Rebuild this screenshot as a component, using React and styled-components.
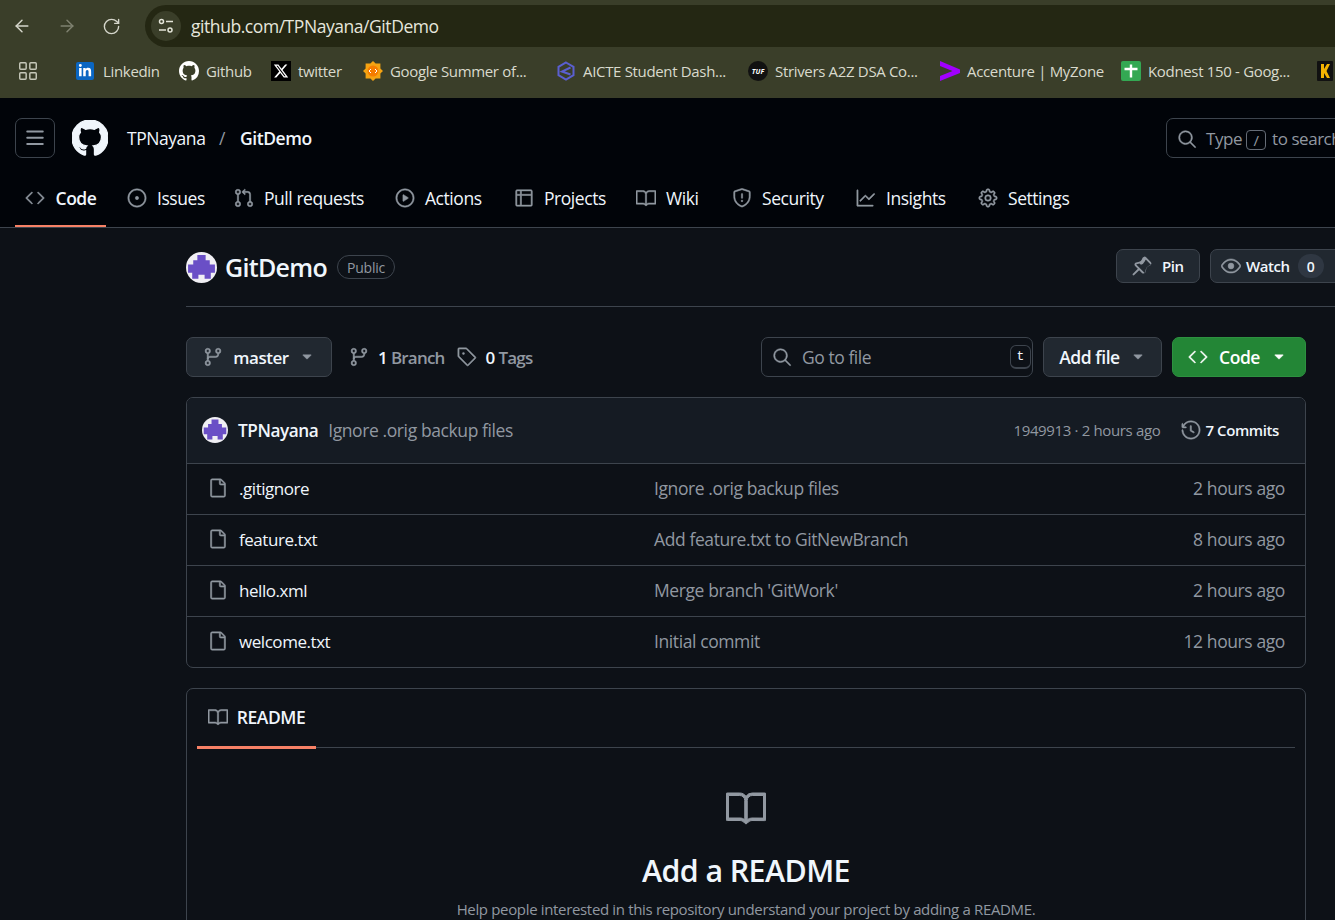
import styled, { createGlobalStyle } from "styled-components";
import { ArrowLeft, ArrowRight, RotateCw, LayoutGrid } from "lucide-react";
import { FaLinkedinIn } from "react-icons/fa";
import { FaXTwitter } from "react-icons/fa6";
import { BsGithub } from "react-icons/bs";
import {
  GoCode,
  GoIssueOpened,
  GoGitPullRequest,
  GoPlay,
  GoTable,
  GoBook,
  GoShield,
  GoGraph,
  GoGear,
  GoEye,
  GoGitBranch,
  GoTag,
  GoSearch,
  GoFile,
  GoHistory,
  GoTriangleDown,
} from "react-icons/go";

const GlobalStyle = createGlobalStyle`
  html, body {
    margin: 0;
    height: 920px;
    overflow: hidden;
    background: #0d1117;
  }
  body {
    font-family: "Open Sans", "Noto Sans", sans-serif;
    font-size: 17px;
    letter-spacing: -0.45px;
    color: #f0f6fc;
  }
  * { box-sizing: border-box; }
  /* octicons come from the 24px set, the page shows the heavier 16px ones */
  header svg[stroke-width="0"], main svg[stroke-width="0"] {
    stroke-width: 0.6px;
  }
`;

const Chrome = styled.div`
  height: 98px;
  background: #3a3e29;
  overflow: hidden;
`;

const ChromeTop = styled.div`
  height: 47px;
  padding-top: 5px;
  display: flex;
  align-items: center;
`;

const NavArrows = styled.div`
  width: 145px;
  flex-shrink: 0;
  display: flex;
  align-items: center;
  gap: 25px;
  padding-left: 12px;
`;

const NavBtn = styled.span`
  display: flex;
  color: ${(p) => (p.$off ? "#7f8270" : "#d5d6cb")};
`;

const Omnibox = styled.div`
  flex: 1;
  height: 42px;
  margin-right: -40px;
  background: #242713;
  border-radius: 21px;
  display: flex;
  align-items: center;
  padding-left: 6px;
  gap: 10px;
`;

const TuneChip = styled.span`
  width: 30px;
  height: 30px;
  border-radius: 50%;
  background: #3a3e29;
  display: flex;
  align-items: center;
  justify-content: center;
`;

const Url = styled.span`
  font-size: 17.5px;
  letter-spacing: -0.44px;
  color: #e6e6dc;
`;

const BookmarkBar = styled.div`
  height: 51px;
  padding: 0 0 3px 17px;
  display: flex;
  align-items: center;
  white-space: nowrap;
`;

const AppsBtn = styled.span`
  display: flex;
  color: #c5c7b8;
  margin-right: 17px;
`;

const BarDivider = styled.span`
  width: 1px;
  height: 20px;
  background: #5c604a;
  margin-right: 20px;
`;

const Bookmark = styled.div`
  display: flex;
  align-items: center;
  gap: 7px;
  width: ${(p) => p.$w}px;
  flex-shrink: 0;
  font-size: 15px;
  letter-spacing: -0.33px;
  color: #d9dacd;
`;

const FavSlot = styled.span`
  width: 20px;
  height: 20px;
  flex-shrink: 0;
  display: flex;
  align-items: center;
`;

const Header = styled.header`
  height: 130px;
  background: #010409;
  border-bottom: 1px solid #3d444d;
  overflow: hidden;
`;

const HeaderTop = styled.div`
  height: 80px;
  padding: 20px 0 0 15px;
  display: flex;
  align-items: flex-start;
`;

const MenuBtn = styled.button`
  width: 40px;
  height: 40px;
  flex-shrink: 0;
  background: transparent;
  border: 1px solid #3d444d;
  border-radius: 7px;
  color: #9198a1;
  display: flex;
  align-items: center;
  justify-content: center;
  padding: 0;
`;

const Logo = styled.span`
  display: flex;
  margin: 2px 0 0 17px;
  color: #f0f6fc;
`;

const Crumbs = styled.div`
  height: 40px;
  margin-left: 19px;
  width: 1039px;
  flex-shrink: 0;
  display: flex;
  align-items: center;
  font-size: 17.5px;
`;

const Owner = styled.span`
  width: 92px;
`;

const Slash = styled.span`
  width: 21px;
  color: #9198a1;
`;

const RepoCrumb = styled.span`
  font-weight: 600;
`;

const SearchBox = styled.div`
  width: 300px;
  height: 40px;
  flex-shrink: 0;
  border: 1px solid #3d444d;
  border-radius: 7px;
  display: flex;
  align-items: center;
  padding: 1px 0 0 10px;
  gap: 9px;
  color: #9198a1;
  white-space: nowrap;
`;

const SlashKey = styled.span`
  display: inline-flex;
  align-items: center;
  justify-content: center;
  width: 20px;
  height: 20px;
  margin: 0 6px 0 4px;
  border: 1px solid #656c76;
  border-radius: 4px;
  font-size: 15px;
  vertical-align: -1px;
`;

const Tabs = styled.nav`
  height: 49px;
  padding-left: 15px;
  display: flex;
  align-items: flex-start;
  gap: 10.5px;
`;

const Tab = styled.div`
  width: ${(p) => p.$w}px;
  flex-shrink: 0;
  height: 49px;
  padding: 0 0 7px 10px;
  display: flex;
  align-items: center;
  gap: 10.5px;
  font-size: 17.5px;
  font-weight: ${(p) => (p.$active ? 600 : 400)};
  color: #f0f6fc;
  border-bottom: 2px solid ${(p) => (p.$active ? "#f78166" : "transparent")};
  svg { color: #9198a1; }
`;

const Page = styled.main`
  height: 692px;
  padding-left: 186px;
  overflow: hidden;
`;

const RepoHead = styled.div`
  height: 79px;
  border-bottom: 1px solid #3d444d;
  display: flex;
  align-items: flex-start;
  padding-top: 21px;
  white-space: nowrap;
`;

const RepoTitle = styled.div`
  width: 930px;
  height: 36px;
  flex-shrink: 0;
  display: flex;
  align-items: center;
`;

const RepoName = styled.span`
  font-size: 25px;
  font-weight: 600;
  letter-spacing: -0.7px;
  margin: 0 10px 0 8px;
`;

const Badge = styled.span`
  height: 24px;
  padding: 0 9px;
  border: 1px solid #3d444d;
  border-radius: 12px;
  font-size: 14px;
  font-weight: 500;
  letter-spacing: -0.2px;
  color: #9198a1;
  display: flex;
  align-items: center;
`;

const RepoActions = styled.div`
  display: flex;
  gap: 10px;
  flex-shrink: 0;
`;

const SmallBtn = styled.div`
  height: 34px;
  width: ${(p) => p.$w}px;
  flex-shrink: 0;
  background: #212830;
  border: 1px solid #3d444d;
  border-radius: 7px;
  display: flex;
  align-items: center;
  padding-left: ${(p) => p.$pad}px;
  gap: ${(p) => p.$gap}px;
  font-size: 15px;
  font-weight: 600;
  letter-spacing: -0.45px;
  svg { color: #9198a1; }
`;

const Counter = styled.span`
  width: 26px;
  height: 24px;
  border-radius: 12px;
  background: #2f3742;
  display: flex;
  align-items: center;
  justify-content: center;
  font-size: 14px;
  margin-left: 3px;
`;

const Content = styled.div`
  width: 1120px;
`;

const FileBar = styled.div`
  height: 40px;
  margin-top: 30px;
  display: flex;
  align-items: center;
`;

const Btn = styled.div`
  height: 40px;
  width: ${(p) => p.$w}px;
  flex-shrink: 0;
  padding-right: ${(p) => (p.$green ? 3 : 0)}px;
  background: ${(p) => (p.$green ? "#238636" : "#212830")};
  border: 1px solid ${(p) => (p.$green ? "#2d9140" : "#3d444d")};
  border-radius: 7px;
  display: flex;
  align-items: center;
  justify-content: center;
  gap: ${(p) => p.$gap || 10}px;
  font-size: 17.5px;
  font-weight: 600;
  color: ${(p) => (p.$green ? "#ffffff" : "#f0f6fc")};
  svg { color: ${(p) => (p.$green ? "#ffffff" : "#9198a1")}; }
`;

const BranchName = styled.span`
  font-size: 17px;
`;

const Stat = styled.div`
  display: flex;
  align-items: center;
  gap: 9px;
  margin-left: ${(p) => p.$ml}px;
  color: #9198a1;
  font-weight: 600;
  letter-spacing: -0.8px;
  svg { color: #9198a1; }
  b { color: #f0f6fc; font-weight: 600; margin-right: -5px; }
`;

const FileSearch = styled.div`
  width: 272px;
  height: 40px;
  margin-left: auto;
  margin-right: 10px;
  border: 1px solid #3d444d;
  border-radius: 7px;
  display: flex;
  align-items: center;
  padding-left: 10px;
  gap: 10px;
  font-size: 17.5px;
  color: #9198a1;
`;

const KeyHint = styled.span`
  margin-left: auto;
  margin-right: 1px;
  width: 21px;
  height: 24px;
  border: 1px solid #3d444d;
  border-bottom-width: 2px;
  border-radius: 6px;
  display: flex;
  align-items: center;
  justify-content: center;
  font-family: "Liberation Mono", monospace;
  font-size: 13px;
  letter-spacing: 0;
  color: #f0f6fc;
`;

const Gap = styled.div`
  width: 10px;
  flex-shrink: 0;
`;

const Table = styled.section`
  margin-top: 20px;
  border: 1px solid #3d444d;
  border-radius: 7px;
  overflow: hidden;
`;

const CommitRow = styled.div`
  height: 65px;
  background: #151b23;
  display: flex;
  align-items: center;
  padding: 0 26px 1px 15px;
`;

const Author = styled.span`
  font-size: 17.2px;
  font-weight: 600;
  margin: 0 10px;
`;

const Muted = styled.span`
  font-size: 17.5px;
  letter-spacing: -0.4px;
  color: #9198a1;
`;

const CommitMeta = styled.span`
  margin-left: auto;
  font-size: 15px;
  letter-spacing: -0.35px;
  color: #9198a1;
`;

const History = styled.span`
  display: flex;
  align-items: center;
  gap: 4px;
  margin-left: 21px;
  font-size: 15px;
  font-weight: 600;
  letter-spacing: -0.4px;
  svg { color: #9198a1; }
`;

const FileRow = styled.div`
  height: 51px;
  border-top: 1px solid #3d444d;
  display: grid;
  grid-template-columns: 446px 1fr auto;
  align-items: center;
  padding: 0 20px 2px 21px;
  color: #f0f6fc;
`;

const FileName = styled.div`
  display: flex;
  align-items: center;
  gap: 11px;
  svg { color: #9198a1; }
`;

const Readme = styled.section`
  margin-top: 20px;
  border: 1px solid #3d444d;
  border-radius: 7px 7px 0 0;
  height: 300px;
`;

const ReadmeTabs = styled.div`
  height: 59px;
  margin: 0 10px;
  border-bottom: 1px solid #3d444d;
`;

const ReadmeTab = styled.div`
  width: 119px;
  height: 60px;
  padding-bottom: 1px;
  border-bottom: 3px solid #f78166;
  display: flex;
  align-items: center;
  justify-content: center;
  gap: 9px;
  font-size: 17.5px;
  font-weight: 600;
  svg { color: #9198a1; }
`;

const Empty = styled.div`
  display: flex;
  flex-direction: column;
  align-items: center;
  padding-top: 40px;
  color: #9198a1;
`;

const EmptyTitle = styled.h2`
  margin: 23px 0 0;
  font-size: 30.4px;
  line-height: 40px;
  font-weight: 600;
  letter-spacing: -0.6px;
  color: #f0f6fc;
`;

const EmptyText = styled.p`
  margin: 8px 0 0;
  font-size: 15px;
  line-height: 20px;
  letter-spacing: -0.34px;
`;

const MenuIcon = () => (
  <svg width="20" height="20" viewBox="0 0 16 16" fill="currentColor">
    <path d="M1 2.75A.75.75 0 0 1 1.75 2h12.5a.75.75 0 0 1 0 1.5H1.75A.75.75 0 0 1 1 2.75Zm0 5A.75.75 0 0 1 1.75 7h12.5a.75.75 0 0 1 0 1.5H1.75A.75.75 0 0 1 1 7.75ZM1.75 12h12.5a.75.75 0 0 1 0 1.5H1.75a.75.75 0 0 1 0-1.5Z" />
  </svg>
);

const PinIcon = () => (
  <svg width="20" height="20" viewBox="0 0 16 16" fill="currentColor">
    <path d="m11.294.984 3.722 3.722a1.75 1.75 0 0 1-.504 2.826l-1.327.613a3.089 3.089 0 0 0-1.707 2.084l-.584 2.454c-.317 1.332-1.972 1.8-2.94.832L5.75 11.311 1.78 15.28a.749.749 0 0 1-1.275-.326.749.749 0 0 1 .215-.734L4.69 10.25 2.487 8.046c-.968-.968-.5-2.623.832-2.94l2.454-.584a3.08 3.08 0 0 0 2.084-1.707l.613-1.327a1.75 1.75 0 0 1 2.824-.504ZM6.128 6.023l-2.454.584c-.192.045-.26.283-.12.423l6.416 6.416c.14.14.378.072.423-.12l.584-2.454a4.582 4.582 0 0 1 2.537-3.098l1.328-.613a.25.25 0 0 0 .072-.404l-3.722-3.722a.25.25 0 0 0-.404.072l-.613 1.328a4.582 4.582 0 0 1-3.047 2.538Z" />
  </svg>
);

const TuneIcon = () => (
  <svg width="18" height="18" viewBox="0 0 18 18" fill="none" stroke="#e3e4d8" strokeWidth="1.5">
    <circle cx="4.5" cy="4.5" r="2" />
    <path d="M9 4.5h7M2 13h7" />
    <circle cx="13" cy="13" r="2" />
  </svg>
);

const Identicon = ({ size }) => (
  <svg width={size} height={size} viewBox="0 0 30 30">
    <circle cx="15" cy="15" r="15" fill="#f0eff4" />
    <path d="M11 3h8v5h4v4h5v8h-4v6h-6v-4h-6v4H6v-6H2v-8h5V8h4z" fill="#6a4fc6" />
  </svg>
);

const GsocIcon = () => (
  <svg width="20" height="20" viewBox="0 0 20 20">
    <path d="M10 0l2.6 2.6h4.8v4.8L20 10l-2.6 2.6v4.8h-4.8L10 20l-2.6-2.6H2.6v-4.8L0 10l2.6-2.6V2.6h4.8z" fill="#f5a312" />
    <circle cx="10" cy="10" r="5.5" fill="#f57c00" />
    <path d="M8 8l-2 2 2 2M12 8l2 2-2 2" fill="none" stroke="#fff" strokeWidth="1" />
  </svg>
);

const AicteIcon = () => (
  <svg width="20" height="20" viewBox="0 0 20 20" fill="none" stroke="#5a5fd0" strokeWidth="2">
    <path d="M10 1.5l7.5 4.3v8.4L10 18.5l-7.5-4.3V5.8z" />
    <path d="M14.5 6.5L6 10.5l8.5 3" />
  </svg>
);

const TufIcon = () => (
  <svg width="20" height="20" viewBox="0 0 20 20">
    <circle cx="10" cy="10" r="10" fill="#111" />
    <text x="10" y="12.5" textAnchor="middle" fontSize="7" fontWeight="700" fontStyle="italic" fill="#fff" letterSpacing="0">
      TUF
    </text>
  </svg>
);

const AccentureIcon = () => (
  <svg width="20" height="20" viewBox="0 0 20 20">
    <path d="M0 0l20 8.5v3.5L0 20v-5l12.5-5L0 5z" fill="#a100ff" />
  </svg>
);

const SheetIcon = () => (
  <svg width="20" height="20" viewBox="0 0 20 20">
    <rect width="20" height="20" rx="2" fill="#34a853" />
    <path d="M3.5 8h13M10 3.5v13" stroke="#fff" strokeWidth="2.4" />
  </svg>
);

const KodIcon = () => (
  <svg width="20" height="20" viewBox="0 0 20 20">
    <rect x="2" width="16" height="20" rx="1" fill="#111" />
    <path d="M6 3h3v5l3-5h3l-3.5 7L15 17h-3l-3-5v5H6z" fill="#f5b301" />
  </svg>
);

const LinkedinFav = styled(FaLinkedinIn)`
  background: #0a66c2;
  padding: 2px;
  border-radius: 2px;
`;

const TwitterFav = styled(FaXTwitter)`
  background: #000;
  padding: 2px;
`;

const bookmarks = [
  { label: "Linkedin", w: 103, icon: <LinkedinFav size={18} color="#fff" /> },
  { label: "Github", w: 92, icon: <BsGithub size={20} color="#fff" /> },
  { label: "twitter", w: 92, icon: <TwitterFav size={20} color="#fff" /> },
  { label: "Google Summer of...", w: 193, icon: <GsocIcon /> },
  { label: "AICTE Student Dash...", w: 192, icon: <AicteIcon /> },
  { label: "Strivers A2Z DSA Co...", w: 192, icon: <TufIcon /> },
  { label: "Accenture | MyZone", w: 181, icon: <AccentureIcon /> },
  { label: "Kodnest 150 - Goog...", w: 194, icon: <SheetIcon /> },
  { label: "", w: 30, icon: <KodIcon /> },
];

const tabs = [
  { label: "Code", Icon: GoCode, w: 91, active: true },
  { label: "Issues", Icon: GoIssueOpened, w: 96.5 },
  { label: "Pull requests", Icon: GoGitPullRequest, w: 150.5 },
  { label: "Actions", Icon: GoPlay, w: 108.5 },
  { label: "Projects", Icon: GoTable, w: 111.5 },
  { label: "Wiki", Icon: GoBook, w: 85.5 },
  { label: "Security", Icon: GoShield, w: 113.5 },
  { label: "Insights", Icon: GoGraph, w: 111.5 },
  { label: "Settings", Icon: GoGear, w: 113 },
];

const files = [
  { name: ".gitignore", msg: "Ignore .orig backup files", age: "2 hours ago" },
  { name: "feature.txt", msg: "Add feature.txt to GitNewBranch", age: "8 hours ago" },
  { name: "hello.xml", msg: "Merge branch 'GitWork'", age: "2 hours ago" },
  { name: "welcome.txt", msg: "Initial commit", age: "12 hours ago" },
];

const App = () => (
  <>
    <GlobalStyle />
    <Chrome>
      <ChromeTop>
        <NavArrows>
          <NavBtn><ArrowLeft size={20} strokeWidth={1.75} /></NavBtn>
          <NavBtn $off><ArrowRight size={20} strokeWidth={1.75} /></NavBtn>
          <NavBtn><RotateCw size={19} strokeWidth={1.75} /></NavBtn>
        </NavArrows>
        <Omnibox>
          <TuneChip><TuneIcon /></TuneChip>
          <Url>github.com/TPNayana/GitDemo</Url>
        </Omnibox>
      </ChromeTop>
      <BookmarkBar>
        <AppsBtn><LayoutGrid size={22} strokeWidth={1.6} /></AppsBtn>
        <BarDivider />
        {bookmarks.map((b) => (
          <Bookmark key={b.w + b.label} $w={b.w}>
            <FavSlot>{b.icon}</FavSlot>
            {b.label}
          </Bookmark>
        ))}
      </BookmarkBar>
    </Chrome>

    <Header>
      <HeaderTop>
        <MenuBtn><MenuIcon /></MenuBtn>
        <Logo><BsGithub size={36} /></Logo>
        <Crumbs>
          <Owner>TPNayana</Owner>
          <Slash>/</Slash>
          <RepoCrumb>GitDemo</RepoCrumb>
        </Crumbs>
        <SearchBox>
          <GoSearch size={20} />
          <span>Type<SlashKey>/</SlashKey>to search</span>
        </SearchBox>
      </HeaderTop>
      <Tabs>
        {tabs.map(({ label, Icon, w, active }) => (
          <Tab key={label} $w={w} $active={active}>
            <Icon size={20} />
            {label}
          </Tab>
        ))}
      </Tabs>
    </Header>

    <Page>
      <RepoHead>
        <RepoTitle>
          <Identicon size={31} />
          <RepoName>GitDemo</RepoName>
          <Badge>Public</Badge>
        </RepoTitle>
        <RepoActions>
          <SmallBtn $w={84} $pad={15} $gap={10}><PinIcon />Pin</SmallBtn>
          <SmallBtn $w={140} $pad={10} $gap={5}><GoEye size={20} />Watch<Counter>0</Counter></SmallBtn>
        </RepoActions>
      </RepoHead>

      <Content>
        <FileBar>
          <Btn $w={146} $gap={10}>
            <GoGitBranch size={20} />
            <BranchName>master</BranchName>
            <GoTriangleDown size={16} />
          </Btn>
          <Stat $ml={17}><GoGitBranch size={20} /><b>1</b> Branch</Stat>
          <Stat $ml={12}><GoTag size={20} /><b>0</b> Tags</Stat>
          <FileSearch>
            <GoSearch size={20} />
            Go to file
            <KeyHint>t</KeyHint>
          </FileSearch>
          <Btn $w={119}>Add file<GoTriangleDown size={16} /></Btn>
          <Gap />
          <Btn $w={134} $green $gap={11}><GoCode size={20} />Code<GoTriangleDown size={16} /></Btn>
        </FileBar>

        <Table>
          <CommitRow>
            <Identicon size={26} />
            <Author>TPNayana</Author>
            <Muted>Ignore .orig backup files</Muted>
            <CommitMeta>1949913 · 2 hours ago</CommitMeta>
            <History><GoHistory size={20} />7 Commits</History>
          </CommitRow>
          {files.map((f) => (
            <FileRow key={f.name}>
              <FileName><GoFile size={20} />{f.name}</FileName>
              <Muted>{f.msg}</Muted>
              <Muted>{f.age}</Muted>
            </FileRow>
          ))}
        </Table>

        <Readme>
          <ReadmeTabs>
            <ReadmeTab><GoBook size={20} />README</ReadmeTab>
          </ReadmeTabs>
          <Empty>
            <GoBook size={40} />
            <EmptyTitle>Add a README</EmptyTitle>
            <EmptyText>Help people interested in this repository understand your project by adding a README.</EmptyText>
          </Empty>
        </Readme>
      </Content>
    </Page>
  </>
);

export default App;
